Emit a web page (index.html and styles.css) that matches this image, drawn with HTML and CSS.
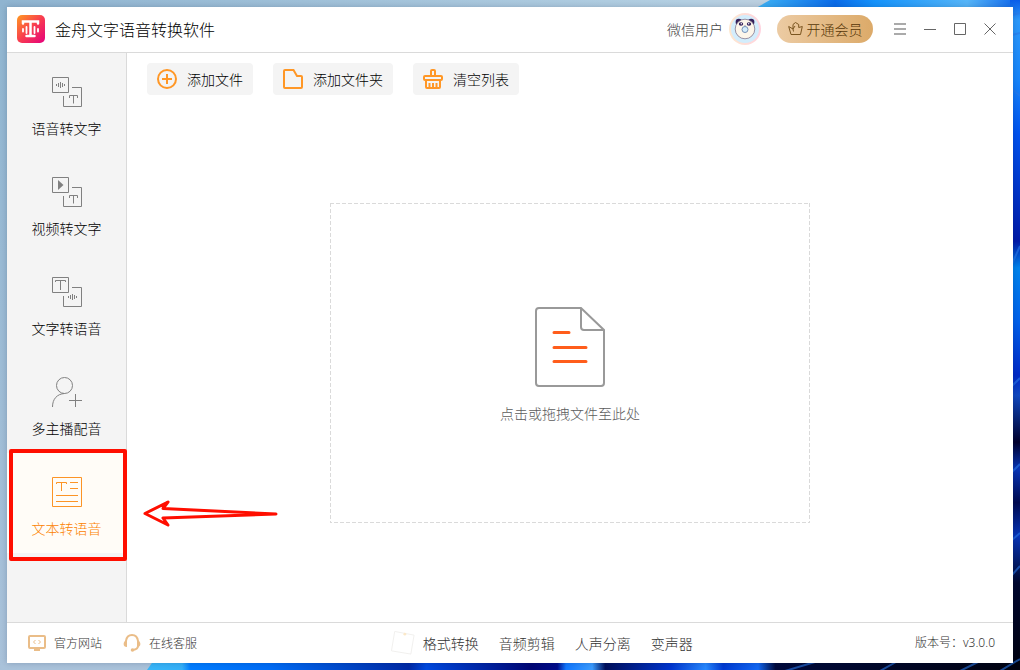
FILE: index.html
```html
<!DOCTYPE html>
<html lang="zh-CN">
<head>
<meta charset="utf-8">
<title>金舟文字语音转换软件</title>
<link rel="stylesheet" href="styles.css">
</head>
<body>
<svg class="wallpaper" viewBox="0 0 1020 670" preserveAspectRatio="none" aria-hidden="true">
  <defs>
    <linearGradient id="sky" x1="0" y1="0" x2="0" y2="1"><stop offset="0" stop-color="#8fb5d0"/><stop offset="1" stop-color="#a9c2da"/></linearGradient>
    <linearGradient id="top"><stop offset="0" stop-color="#8fb4d0"/><stop offset=".67" stop-color="#b3cfe2"/><stop offset=".75" stop-color="#bccfdf"/></linearGradient>
    <linearGradient id="topBlue"><stop offset="0" stop-color="#3fb4f5"/><stop offset=".3" stop-color="#0a6be8"/><stop offset=".45" stop-color="#1593fb"/><stop offset=".8" stop-color="#55b5f8"/><stop offset="1" stop-color="#0b62ea"/></linearGradient>
    <linearGradient id="right" x1="0" y1="0" x2="0" y2="1"><stop offset="0" stop-color="#0a5ce8"/><stop offset=".03" stop-color="#2b98fa"/><stop offset=".12" stop-color="#1684fa"/><stop offset=".2" stop-color="#0052ee"/><stop offset=".36" stop-color="#001aa8"/><stop offset=".4" stop-color="#0083ec"/><stop offset=".48" stop-color="#0060ea"/><stop offset=".56" stop-color="#0029c6"/><stop offset=".59" stop-color="#1048c0"/><stop offset=".66" stop-color="#00002c"/><stop offset=".7" stop-color="#0835b8"/><stop offset=".75" stop-color="#000a50"/><stop offset=".8" stop-color="#0835b8"/><stop offset=".87" stop-color="#00082f"/><stop offset="1" stop-color="#01020e"/></linearGradient>
    <linearGradient id="bottom"><stop offset="0" stop-color="#38b6f8"/><stop offset=".04" stop-color="#35b0f8"/><stop offset=".05" stop-color="#007cff"/><stop offset=".14" stop-color="#006cf5"/><stop offset=".3" stop-color="#0029a5"/><stop offset=".32" stop-color="#0049df"/><stop offset=".44" stop-color="#000675"/><stop offset=".47" stop-color="#000c8b"/><stop offset=".48" stop-color="#1278ff"/><stop offset=".51" stop-color="#3b9cff"/><stop offset=".525" stop-color="#00105c"/><stop offset=".6" stop-color="#0035cf"/><stop offset=".64" stop-color="#2788ff"/><stop offset=".66" stop-color="#003ad2"/><stop offset=".7" stop-color="#1268f4"/><stop offset=".72" stop-color="#000a3c"/><stop offset="1" stop-color="#01030f"/></linearGradient>
  </defs>
  <path fill="url(#sky)" d="M0 0h1020v670H0z"/>
  <path fill="url(#top)" d="M0 0h1020v8H0z"/>
  <path fill="url(#topBlue)" d="M770 0h250v8H756z"/>
  <path fill="url(#right)" d="M1010 0h10v670h-10z"/>
  <path fill="url(#bottom)" d="M154 660h866v10H147z"/>
  <path class="streak" d="M1012 15l8-2M1012 35l8-2M1012 89l8 7M1012 264l8-18M1012 386l8-8M1012 472l8-8M1012 540l8-7M1012 575l8-9M785 671l30-9M880 671l16-9M960 671l18-9M1000 671l20-12"/>
</svg>

<div class="window">
  <header class="titlebar">
    <svg class="logo" viewBox="0 0 28 28" aria-hidden="true">
      <defs><linearGradient id="logoFill" x1="0" y1="0" x2="1" y2="1"><stop offset="0" stop-color="#ff9a20"/><stop offset=".5" stop-color="#f83c50"/><stop offset="1" stop-color="#e5007d"/></linearGradient></defs>
      <rect width="28" height="28" rx="5" fill="url(#logoFill)"/>
      <path d="M6 8.500V6.500h15v2M13.500 6.500v14M9.500 21h8" fill="none" stroke="#fff" stroke-width="2.500" stroke-linecap="round"/>
      <path d="M6 14v2.500M9.500 12v6M17.500 12v6M21 14v2.500" fill="none" stroke="#fff" stroke-width="1.800" stroke-linecap="round"/>
    </svg>
    <h1 class="title">金舟文字语音转换软件</h1>
    <span class="user">微信用户</span>
    <svg class="avatar" viewBox="0 0 32 32" aria-hidden="true">
      <defs><linearGradient id="ring" x1="0" y1="0" x2="1" y2="0"><stop offset="0" stop-color="#fde8cf"/><stop offset="1" stop-color="#ffd3df"/></linearGradient></defs>
      <circle cx="16" cy="16" r="16" fill="url(#ring)"/>
      <circle cx="16" cy="16" r="14" fill="#d3edfc"/>
      <circle cx="9.800" cy="9" r="3.200" fill="#35205a"/><circle cx="22.200" cy="9" r="3.200" fill="#35205a"/>
      <circle cx="16" cy="16" r="9.800" fill="#fdf6ea" stroke="#77657e" stroke-width=".7"/>
      <ellipse cx="12" cy="11" rx="2.200" ry="1.700" fill="#35205a"/><ellipse cx="20" cy="11" rx="2.200" ry="1.700" fill="#35205a"/>
      <circle cx="12.300" cy="10.800" r=".7" fill="#fff"/><circle cx="19.700" cy="10.800" r=".7" fill="#fff"/>
      <path d="M15 12.800h2l-1 1z" fill="#35205a"/>
      <circle cx="16" cy="16.500" r="3" fill="#d3edfc" stroke="#7892b8"/>
    </svg>
    <button class="vip" type="button">
      <svg class="vip-icon" viewBox="0 0 15 15" aria-hidden="true"><path d="M3 13.500h9.500L14.300 5.500l-3.600 1V3.500L7.500 1.500 5 3.500v4.500L.700 5.500zM5 8l.5 2.500M5 8l2-3"/></svg>
      开通会员
    </button>
    <div class="controls">
      <button type="button" aria-label="菜单"><svg viewBox="0 0 14 14"><path class="bars" d="M1 2h12M1 7h12M1 12h12"/></svg></button>
      <button type="button" aria-label="最小化"><svg viewBox="0 0 14 14"><path d="M1 7.500h12"/></svg></button>
      <button type="button" aria-label="最大化"><svg viewBox="0 0 14 14"><path d="M1.500 1.500h11v11h-11z"/></svg></button>
      <button type="button" aria-label="关闭"><svg viewBox="0 0 14 14"><path d="M1.500 1.500l11 11M12.500 1.500l-11 11"/></svg></button>
    </div>
  </header>

  <div class="body">
    <nav class="sidebar">
      <button class="nav-item" type="button">
        <svg class="nav-icon" viewBox="0 0 30 30" aria-hidden="true"><path d="M.5.500h16v15H.500zM20 10.500h9.500v19h-18V19M17.500 21v-2.500h8V21M21.500 18.500v8"/><path d="M4.500 7v2M6.500 6v4M8.500 5v6M10.500 6v4M12.500 7v2"/></svg>
        语音转文字
      </button>
      <button class="nav-item" type="button">
        <svg class="nav-icon" viewBox="0 0 30 30" aria-hidden="true"><path d="M.5.500h16v15H.500zM20 10.500h9.500v19h-18V19M17.500 21v-2.500h8V21M21.500 18.500v8"/><path class="solid" d="M6 3l5.500 5L6 13z"/></svg>
        视频转文字
      </button>
      <button class="nav-item" type="button">
        <svg class="nav-icon" viewBox="0 0 30 30" aria-hidden="true"><path d="M.5.500h16v15H.500zM20 10.500h9.500v19h-18V19M3.500 5V3.500h10V5M8.500 3.500V13"/><path d="M16.500 19v2M18.500 18v4M20.500 17v6M22.500 18v4M24.500 19v2"/></svg>
        文字转语音
      </button>
      <button class="nav-item" type="button">
        <svg class="nav-icon" viewBox="0 0 30 30" aria-hidden="true"><circle cx="12.500" cy="8.500" r="8"/><path d="M.5 30C.5 22 5 17 12.500 16.500M17 23.500h13M23.500 17v13"/></svg>
        多主播配音
      </button>
      <button class="nav-item active" type="button" aria-current="page">
        <svg class="nav-icon" viewBox="0 0 30 30" aria-hidden="true"><path d="M.5.500h29v29H.500zM4.500 7V5.500h10V7M9.500 5.500V14M18 5.500h8M18 11.500h8M4 18.500h22M4 24.500h22"/></svg>
        文本转语音
      </button>
    </nav>

    <main class="workspace">
      <div class="toolbar">
        <button class="tool" type="button">
          <svg viewBox="0 0 20 20" aria-hidden="true"><circle cx="10" cy="10" r="9"/><path d="M5 10h10M10 5v10"/></svg>
          添加文件
        </button>
        <button class="tool" type="button">
          <svg viewBox="0 0 20 20" aria-hidden="true"><path d="M1 2a1 1 0 0 1 1-1h8.500l3.500 6h4a1 1 0 0 1 1 1v10a1 1 0 0 1-1 1H2a1 1 0 0 1-1-1z"/></svg>
          添加文件夹
        </button>
        <button class="tool" type="button">
          <svg viewBox="0 0 20 20" aria-hidden="true"><path d="M8 7V2a1 1 0 0 1 1-1h2a1 1 0 0 1 1 1v5M1 10V8a1 1 0 0 1 1-1h16a1 1 0 0 1 1 1v2a1 1 0 0 1-1 1H2a1 1 0 0 1-1-1zM3 11v7a1 1 0 0 0 1 1h12a1 1 0 0 0 1-1v-7M6.500 14v5M10 14v5M13.500 14v5"/></svg>
          清空列表
        </button>
      </div>
      <div class="drop-area">
        <button class="dropzone" type="button">
          <svg class="dashes" aria-hidden="true"><rect x="0" y="0" width="100%" height="100%"/></svg>
          <svg class="doc" viewBox="0 0 70 80" aria-hidden="true"><path d="M46 1H4a3 3 0 0 0-3 3v72a3 3 0 0 0 3 3h62a3 3 0 0 0 3-3V23zM46 1v19a3 3 0 0 0 3 3h20"/><path class="lines" d="M19 25.500h15M19 40.500h32M19 54.500h32"/></svg>
          点击或拖拽文件至此处
        </button>
      </div>
    </main>
  </div>

  <footer class="footer">
    <div class="support">
      <a href="#"><svg class="site" viewBox="0 0 18 18" aria-hidden="true"><rect x="1" y="2" width="16" height="12" rx="1"/><path d="M7.500 6l-2 2 2 2M10.500 6l2 2-2 2"/><path class="solid" d="M6 14h6v3H6z"/></svg>官方网站</a>
      <a href="#"><svg class="service" viewBox="0 0 18 18" aria-hidden="true"><path d="M3 7C4-1 14-1 15 7M15 12c0 2-2 3.500-5 4"/><path class="solid" d="M4 6v7C-.500 13-.500 7 4 6zM14 6v7c4.500 0 4.500-6 0-7z"/><circle class="solid" cx="9.500" cy="16" r="1.800"/></svg>在线客服</a>
    </div>
    <div class="more">
      <svg class="tile" viewBox="0 0 26 26" aria-hidden="true"><path d="M4 .500L25 4.500 21.500 25 .500 21.500z"/><circle cx="15" cy="3.500" r="1.500"/></svg>
      <a href="#">格式转换</a>
      <a href="#">音频剪辑</a>
      <a href="#">人声分离</a>
      <a href="#">变声器</a>
    </div>
    <span class="version">版本号：v3.0.0</span>
  </footer>
</div>

<div class="highlight" aria-hidden="true"></div>
<svg class="arrow" viewBox="0 0 136 28" aria-hidden="true"><path d="M133 14L20 8.500 25 2 2 13.500 25 25l-5-7z"/></svg>
</body>
</html>
```

FILE: styles.css
```css
* { box-sizing: border-box; }

body {
  margin: 0;
  height: 100vh;
  padding: 7px;
  position: relative;
  overflow: hidden;
  font-family: "Noto Sans CJK SC", sans-serif;
  font-weight: 300;
  font-size: 14px;
  line-height: 20px;
  color: #000;
}

button {
  margin: 0;
  padding: 0;
  border: 0;
  background: none;
  color: inherit;
  font: inherit;
  white-space: nowrap;
}

a { color: inherit; text-decoration: none; }
svg { display: block; flex: none; fill: none; }

.wallpaper {
  position: absolute;
  inset: 0;
  width: 100%;
  height: 100%;
}
.streak { stroke: #2a78e8; stroke-width: 2; opacity: .6; }

.window {
  position: relative;
  height: 100%;
  display: flex;
  flex-direction: column;
  background: #fff;
  box-shadow: 0 0 6px rgba(0, 20, 50, .2);
}

.titlebar {
  display: flex;
  align-items: center;
  height: 46px;
  padding: 0 8px 2px 10px;
  border-bottom: 1px solid #dadada;
}
.logo { width: 28px; height: 28px; }
.title {
  margin: 0 auto 0 10px;
  font-size: 16px;
  line-height: 24px;
  font-weight: 300;
}
.user { color: #444; }
.avatar { width: 32px; height: 32px; margin-left: 6px; }

.vip {
  display: flex;
  align-items: center;
  justify-content: center;
  gap: 4px;
  width: 96px;
  height: 28px;
  margin-left: 16px;
  border-radius: 14px;
  background: linear-gradient(90deg, #eccba3, #dcaa69);
  color: #573708;
}
.vip-icon { width: 15px; height: 15px; stroke: #7a5520; stroke-linejoin: round; }

.controls { display: flex; margin-left: 12px; }
.controls button {
  width: 30px;
  height: 30px;
  display: grid;
  place-items: center;
}
.controls svg { width: 14px; height: 14px; stroke: #666; }
.controls .bars { stroke: #aaa; stroke-width: 2; }

.body { flex: 1; display: flex; min-height: 0; }

.sidebar {
  width: 120px;
  border-right: 1px solid #dadada;
  background: #f4f4f4;
}
.nav-item {
  display: flex;
  flex-direction: column;
  align-items: center;
  gap: 11px;
  width: 100%;
  height: 100px;
  padding-top: 24px;
}
.nav-icon { width: 30px; height: 30px; stroke: #808080; }
.nav-icon .solid { fill: #808080; stroke: none; }
.nav-item.active { background: #fffcf7; color: #fc8200; }
.active .nav-icon { stroke: #fc9426; }

.workspace {
  flex: 1;
  display: flex;
  flex-direction: column;
  padding: 10px 20px;
}
.toolbar { display: flex; gap: 20px; }
.tool {
  display: flex;
  align-items: center;
  gap: 10px;
  height: 32px;
  padding: 0 10px;
  border-radius: 4px;
  background: #f4f4f4;
}
.tool svg { width: 20px; height: 20px; stroke: #ff9726; stroke-width: 2; }

.drop-area {
  flex: 1;
  display: grid;
  place-items: center;
  padding-top: 18px;
}
.dropzone {
  position: relative;
  display: flex;
  flex-direction: column;
  align-items: center;
  justify-content: center;
  gap: 16px;
  width: 480px;
  height: 320px;
  padding-top: 4px;
  color: #5c5c5c;
}
.dashes { position: absolute; inset: 0; width: 100%; height: 100%; }
.dashes rect { stroke: #dadada; stroke-width: 2; stroke-dasharray: 4 2; }
.doc { width: 70px; height: 80px; stroke: #999; stroke-width: 2; }
.doc .lines { stroke: #ff5d1b; stroke-width: 3; stroke-linecap: round; }

.footer {
  display: grid;
  grid-template-columns: 6fr auto 5fr;
  align-items: center;
  height: 41px;
  padding: 0 18px 0 21px;
  border-top: 1px solid #dadada;
  color: #333;
}
.support { display: flex; gap: 21px; font-size: 12px; }
.support a { display: flex; align-items: center; gap: 8px; }
.support svg { width: 18px; height: 18px; stroke: #eabd88; stroke-width: 2; }
.support .solid { fill: #eabd88; stroke: none; }
.support .site path { stroke-width: 1; }
.more { display: flex; align-items: center; gap: 20px; }
.tile { width: 24px; height: 24px; margin-right: -12px; stroke: #f0efed; }
.tile circle { fill: #fbe8c8; stroke: none; }
.version {
  justify-self: end;
  font-family: "Noto Sans", "Noto Sans CJK SC", sans-serif;
  font-size: 12px;
}

.highlight {
  position: absolute;
  left: 9px;
  top: 449px;
  width: 118px;
  height: 112px;
  border: 4px solid #ff0e00;
  border-radius: 2px;
}
.arrow {
  position: absolute;
  left: 143px;
  top: 500px;
  width: 136px;
  height: 28px;
  stroke: #ff0e00;
  stroke-width: 3;
  stroke-linejoin: round;
}
```
